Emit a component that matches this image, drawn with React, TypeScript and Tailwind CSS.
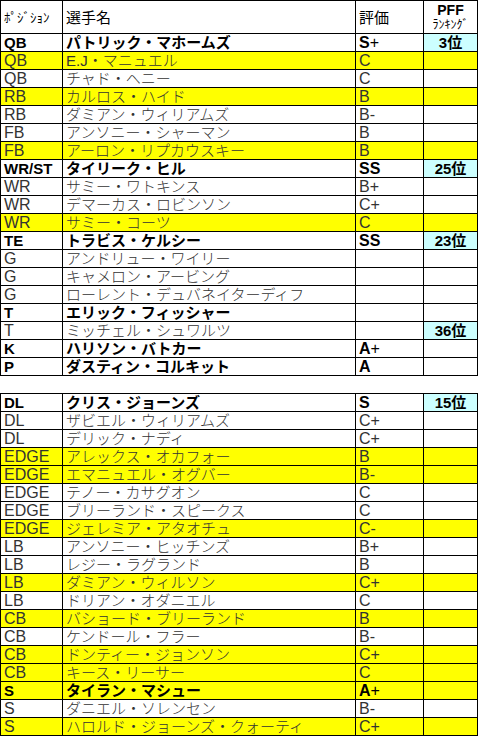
import clsx from 'clsx'

type Row = {
  pos: string
  name: string
  grade?: string
  rank?: string
  bold?: boolean
  yellow?: boolean
}

const offense: Row[] = [
  { pos: 'QB', name: 'パトリック・マホームズ', grade: 'S+', rank: '3位', bold: true },
  { pos: 'QB', name: 'E.J・マニュエル', grade: 'C', yellow: true },
  { pos: 'QB', name: 'チャド・ヘニー', grade: 'C' },
  { pos: 'RB', name: 'カルロス・ハイド', grade: 'B', yellow: true },
  { pos: 'RB', name: 'ダミアン・ウィリアムズ', grade: 'B-' },
  { pos: 'FB', name: 'アンソニー・シャーマン', grade: 'B' },
  { pos: 'FB', name: 'アーロン・リプカウスキー', grade: 'B', yellow: true },
  { pos: 'WR/ST', name: 'タイリーク・ヒル', grade: 'SS', rank: '25位', bold: true },
  { pos: 'WR', name: 'サミー・ワトキンス', grade: 'B+' },
  { pos: 'WR', name: 'デマーカス・ロビンソン', grade: 'C+' },
  { pos: 'WR', name: 'サミー・コーツ', grade: 'C', yellow: true },
  { pos: 'TE', name: 'トラビス・ケルシー', grade: 'SS', rank: '23位', bold: true },
  { pos: 'G', name: 'アンドリュー・ワイリー' },
  { pos: 'G', name: 'キャメロン・アービング' },
  { pos: 'G', name: 'ローレント・デュバネイターディフ' },
  { pos: 'T', name: 'エリック・フィッシャー', bold: true },
  { pos: 'T', name: 'ミッチェル・シュワルツ', rank: '36位' },
  { pos: 'K', name: 'ハリソン・バトカー', grade: 'A+', bold: true },
  { pos: 'P', name: 'ダスティン・コルキット', grade: 'A', bold: true },
]

const defense: Row[] = [
  { pos: 'DL', name: 'クリス・ジョーンズ', grade: 'S', rank: '15位', bold: true },
  { pos: 'DL', name: 'ザビエル・ウィリアムズ', grade: 'C+' },
  { pos: 'DL', name: 'デリック・ナディ', grade: 'C+' },
  { pos: 'EDGE', name: 'アレックス・オカフォー', grade: 'B', yellow: true },
  { pos: 'EDGE', name: 'エマニュエル・オグバー', grade: 'B-', yellow: true },
  { pos: 'EDGE', name: 'テノー・カサグオン', grade: 'C' },
  { pos: 'EDGE', name: 'ブリーランド・スピークス', grade: 'C' },
  { pos: 'EDGE', name: 'ジェレミア・アタオチュ', grade: 'C-', yellow: true },
  { pos: 'LB', name: 'アンソニー・ヒッチンズ', grade: 'B+' },
  { pos: 'LB', name: 'レジー・ラグランド', grade: 'B' },
  { pos: 'LB', name: 'ダミアン・ウィルソン', grade: 'C+', yellow: true },
  { pos: 'LB', name: 'ドリアン・オダニエル', grade: 'C' },
  { pos: 'CB', name: 'バショード・ブリーランド', grade: 'B', yellow: true },
  { pos: 'CB', name: 'ケンドール・フラー', grade: 'B-' },
  { pos: 'CB', name: 'ドンティー・ジョンソン', grade: 'C+', yellow: true },
  { pos: 'CB', name: 'キース・リーサー', grade: 'C', yellow: true },
  { pos: 'S', name: 'タイラン・マシュー', grade: 'A+', bold: true, yellow: true },
  { pos: 'S', name: 'ダニエル・ソレンセン', grade: 'B-' },
  { pos: 'S', name: 'ハロルド・ジョーンズ・クォーティ', grade: 'C+', yellow: true },
]

const cols = 'grid grid-cols-[62px_293px_68px_54px]'
const cell = 'border-r border-b border-black h-[18px] flex items-center px-[3px] overflow-hidden whitespace-nowrap'
const head = 'border-r border-b border-black h-[33px] flex items-center px-[3px] text-black whitespace-nowrap'

function Grade({ value, bold }: { value?: string; bold?: boolean }) {
  if (!value) return null
  // 記号は細字のまま
  const letters = value.replace(/[+-]$/, '')
  const sign = value.slice(letters.length)
  return (
    <>
      <span className={bold ? 'font-bold' : ''}>{letters}</span>
      {sign && <span className="font-light">{sign}</span>}
    </>
  )
}

function TableRow({ row }: { row: Row }) {
  const bg = row.yellow ? 'bg-[#ffff00]' : 'bg-white'
  const text = row.bold ? 'font-bold text-black' : 'font-light text-[#333]'
  return (
    <div className={cols}>
      <div className={clsx(cell, bg, text, row.bold ? 'text-[15px]' : 'text-[16px]')}>{row.pos}</div>
      <div className={clsx(cell, bg, text)}>{row.name}</div>
      <div className={clsx(cell, bg, 'font-light text-[#333] text-[16px]', row.bold && 'text-black')}>
        <Grade value={row.grade} bold={row.bold} />
      </div>
      <div
        className={clsx(
          cell,
          'justify-center font-bold text-black',
          row.rank ? 'bg-[#ccffff]' : bg
        )}
      >
        {row.rank}
      </div>
    </div>
  )
}

export default function App() {
  return (
    <div
      className="w-[481px] h-[750px] bg-white text-[15px] leading-none"
      style={{ fontFamily: '"Liberation Sans", "Noto Sans CJK JP", sans-serif' }}
    >
      <div className="w-[478px] border-l border-t border-black">
        <div className={cols}>
          <div className={clsx(head, 'text-[13px]')}>ﾎﾟｼﾞｼｮﾝ</div>
          <div className={head}>選手名</div>
          <div className={head}>評価</div>
          <div className="border-r border-b border-black h-[33px] flex flex-col items-center justify-center text-black">
            <span className="font-bold text-[14px] leading-[15px]">PFF</span>
            <span className="text-[12px] leading-[14px] whitespace-nowrap">ﾗﾝｷﾝｸﾞ</span>
          </div>
        </div>
        {offense.map((r, i) => (
          <TableRow key={'o' + i} row={r} />
        ))}
      </div>

      <div className="h-[17px]" />

      <div className="w-[478px] border-l border-t border-black">
        {defense.map((r, i) => (
          <TableRow key={'d' + i} row={r} />
        ))}
      </div>
    </div>
  )
}
